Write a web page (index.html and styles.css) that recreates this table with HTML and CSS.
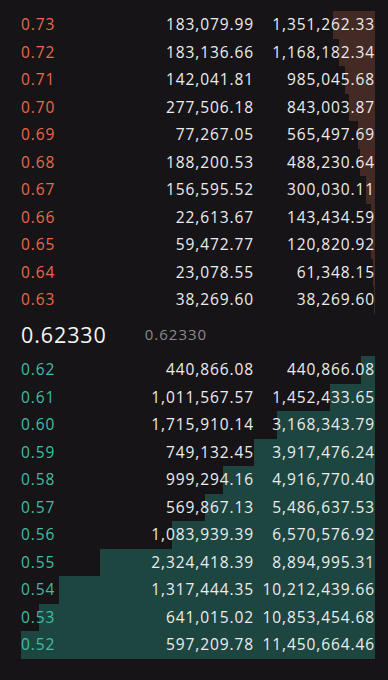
FILE: index.html
```html
<!DOCTYPE html>
<html>
<head>
<meta charset="utf-8">
<link rel="stylesheet" href="styles.css">
</head>
<body>
<div class="book">
  <div class="side asks">
    <div class="row"><div class="bar" style="width:11.80%"></div><span class="price">0.73</span><span class="amt">183,079.99</span><span class="tot">1,351,262.33</span></div>
    <div class="row"><div class="bar" style="width:10.20%"></div><span class="price">0.72</span><span class="amt">183,136.66</span><span class="tot">1,168,182.34</span></div>
    <div class="row"><div class="bar" style="width:8.60%"></div><span class="price">0.71</span><span class="amt">142,041.81</span><span class="tot">985,045.68</span></div>
    <div class="row"><div class="bar" style="width:7.36%"></div><span class="price">0.70</span><span class="amt">277,506.18</span><span class="tot">843,003.87</span></div>
    <div class="row"><div class="bar" style="width:4.94%"></div><span class="price">0.69</span><span class="amt">77,267.05</span><span class="tot">565,497.69</span></div>
    <div class="row"><div class="bar" style="width:4.26%"></div><span class="price">0.68</span><span class="amt">188,200.53</span><span class="tot">488,230.64</span></div>
    <div class="row"><div class="bar" style="width:2.62%"></div><span class="price">0.67</span><span class="amt">156,595.52</span><span class="tot">300,030.11</span></div>
    <div class="row"><div class="bar" style="width:1.25%"></div><span class="price">0.66</span><span class="amt">22,613.67</span><span class="tot">143,434.59</span></div>
    <div class="row"><div class="bar" style="width:1.06%"></div><span class="price">0.65</span><span class="amt">59,472.77</span><span class="tot">120,820.92</span></div>
    <div class="row"><div class="bar" style="width:0.54%"></div><span class="price">0.64</span><span class="amt">23,078.55</span><span class="tot">61,348.15</span></div>
    <div class="row"><div class="bar" style="width:0.33%"></div><span class="price">0.63</span><span class="amt">38,269.60</span><span class="tot">38,269.60</span></div>
  </div>
  <div class="mid">
    <span class="last">0.62330</span>
    <span class="mark">0.62330</span>
  </div>
  <div class="side bids">
    <div class="row"><div class="bar" style="width:3.85%"></div><span class="price">0.62</span><span class="amt">440,866.08</span><span class="tot">440,866.08</span></div>
    <div class="row"><div class="bar" style="width:12.68%"></div><span class="price">0.61</span><span class="amt">1,011,567.57</span><span class="tot">1,452,433.65</span></div>
    <div class="row"><div class="bar" style="width:27.67%"></div><span class="price">0.60</span><span class="amt">1,715,910.14</span><span class="tot">3,168,343.79</span></div>
    <div class="row"><div class="bar" style="width:34.21%"></div><span class="price">0.59</span><span class="amt">749,132.45</span><span class="tot">3,917,476.24</span></div>
    <div class="row"><div class="bar" style="width:42.94%"></div><span class="price">0.58</span><span class="amt">999,294.16</span><span class="tot">4,916,770.40</span></div>
    <div class="row"><div class="bar" style="width:47.92%"></div><span class="price">0.57</span><span class="amt">569,867.13</span><span class="tot">5,486,637.53</span></div>
    <div class="row"><div class="bar" style="width:57.38%"></div><span class="price">0.56</span><span class="amt">1,083,939.39</span><span class="tot">6,570,576.92</span></div>
    <div class="row"><div class="bar" style="width:77.68%"></div><span class="price">0.55</span><span class="amt">2,324,418.39</span><span class="tot">8,894,995.31</span></div>
    <div class="row"><div class="bar" style="width:89.19%"></div><span class="price">0.54</span><span class="amt">1,317,444.35</span><span class="tot">10,212,439.66</span></div>
    <div class="row"><div class="bar" style="width:94.79%"></div><span class="price">0.53</span><span class="amt">641,015.02</span><span class="tot">10,853,454.68</span></div>
    <div class="row"><div class="bar" style="width:100%"></div><span class="price">0.52</span><span class="amt">597,209.78</span><span class="tot">11,450,664.46</span></div>
  </div>
</div>
</body>
</html>
```

FILE: styles.css
```css
html, body {
  margin: 0;
  padding: 0;
  background: #161416;
}
body {
  width: 388px;
  height: 680px;
  overflow: hidden;
  font-family: "Open Sans", "Noto Sans", sans-serif;
  color: #ececec;
}
.book {
  padding: 11px 13px 0 21px;
}
.side {
  display: flex;
  flex-direction: column;
}
.row {
  position: relative;
  display: grid;
  grid-template-columns: 100px 133px 121px;
  align-items: center;
  height: 27.5px;
  font-size: 15.5px;
  letter-spacing: 0.9px;
  line-height: 27.5px;
}
.row span {
  position: relative;
  white-space: nowrap;
}
.bar {
  position: absolute;
  top: 0;
  right: 0;
  bottom: 0;
}
.asks .bar { background: #442a24; }
.bids .bar { background: #1e4640; }
.asks .price { color: #e8694b; }
.bids .price { color: #3ebea6; }
.amt, .tot { text-align: right; }
.mid {
  display: flex;
  align-items: center;
  gap: 38px;
  height: 41.5px;
  padding-bottom: 1px;
}
.last {
  font-size: 21.5px;
  font-weight: 500;
  letter-spacing: 0.9px;
  color: #f4f4f4;
}
.mark {
  font-size: 15px;
  letter-spacing: 1px;
  color: #8a888a;
}
```
